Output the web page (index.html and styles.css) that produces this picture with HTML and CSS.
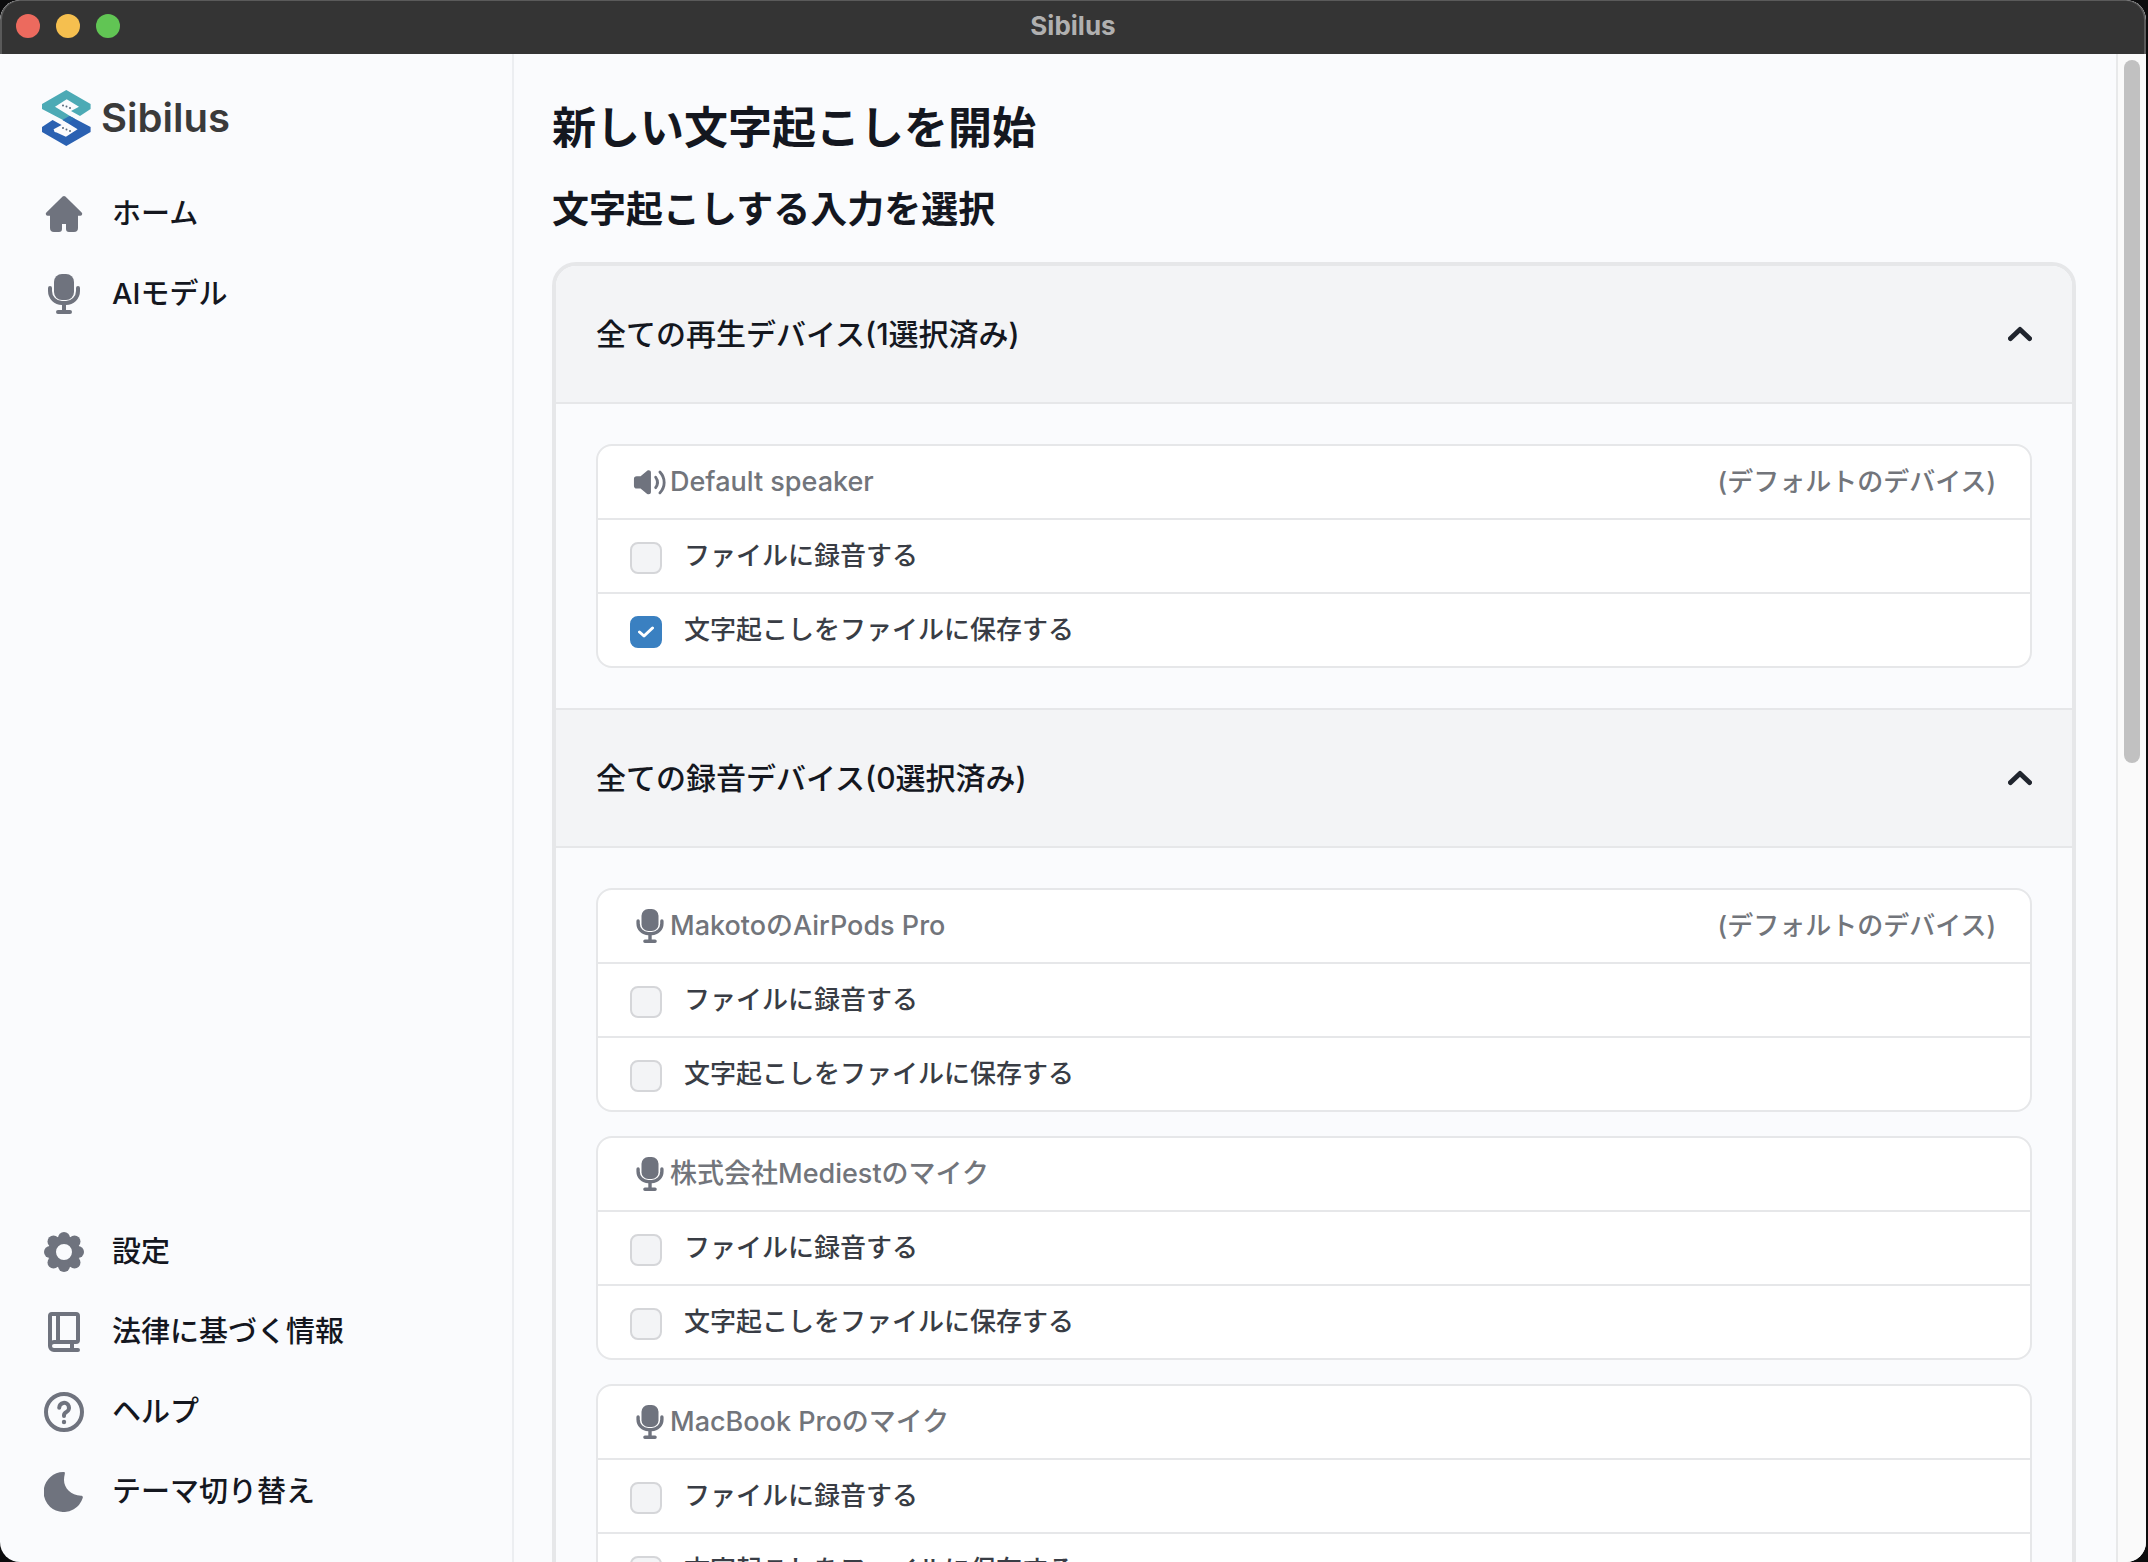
FILE: index.html
```html
<!DOCTYPE html>
<html lang="ja">
<head>
<meta charset="utf-8">
<title>Sibilus</title>
<link rel="stylesheet" href="styles.css">
</head>
<body>
<svg class="sprite" aria-hidden="true">
  <symbol id="mic" viewBox="0 0 40 40">
    <rect x="10" y="0" width="20" height="26" rx="8" fill="currentColor"/>
    <path d="M6 14v3a12 12 0 0 0 12 12h4a12 12 0 0 0 12-12v-3M20 29v8M14 38h12" fill="none" stroke="currentColor" stroke-width="4" stroke-linecap="round"/>
  </symbol>
  <symbol id="speaker" viewBox="0 0 36 36">
    <path d="M4 12C2 12 1 13 1 15v7c0 2 1 3 3 3h4l7 5.600c2 1 4 0 4-2V8c0-2-2-3-4-2L8 12Z" fill="currentColor"/>
    <path d="M24 13c2.500 3.500 2.500 7.500 0 11M28.500 7.500c6 6.500 6 15.500 0 22" fill="none" stroke="currentColor" stroke-width="3" stroke-linecap="round"/>
  </symbol>
  <symbol id="chevron" viewBox="0 0 24 16">
    <path d="M2.500 12.500 12 3.500l9.500 9" fill="none" stroke="currentColor" stroke-width="5" stroke-linecap="round" stroke-linejoin="round"/>
  </symbol>
</svg>

<div class="window">
  <header class="titlebar">
    <div class="lights">
      <button class="light close" aria-label="閉じる"></button>
      <button class="light minimize" aria-label="最小化"></button>
      <button class="light zoom" aria-label="拡大"></button>
    </div>
    <span class="window-title">Sibilus</span>
  </header>

  <div class="content">
    <aside class="sidebar">
      <div class="brand">
        <svg class="brand-mark" viewBox="0 0 49 56" aria-hidden="true">
          <path d="M24.300 0 48.600 14v5L38 26l-9-5 8-4.300-12.300-7.400L13 16.700 28 26l-7 4L0 19v-5Z" fill="#4caab5"/>
          <path d="M24.300 56 0 42v-5l10.600-7 9 5-8 4.300 1 2.700 2 .500 9.300 4.200 11.700-7.400L20.600 30l7-4 21 11v5Z" fill="#2a61b2"/>
          <path d="m20.600 30 7-4 5 2.600-6.500 4.500Z" fill="#2b72b4"/>
          <g fill="#55677a">
            <circle cx="21" cy="15.500" r="1"/><circle cx="24.500" cy="16.500" r="1"/><circle cx="28" cy="18" r="1"/>
            <circle cx="21" cy="38" r="1"/><circle cx="24.500" cy="39.500" r="1"/><circle cx="28" cy="41" r="1"/>
          </g>
        </svg>
        <span class="brand-name">Sibilus</span>
      </div>

      <nav class="nav">
        <a class="nav-item" href="#home">
          <svg class="nav-icon" viewBox="0 0 40 40" aria-hidden="true">
            <path d="M18.600 2.600a2 2 0 0 1 2.800 0L37.400 18.200A2 2 0 0 1 36 21.800h-2V34a4 4 0 0 1-4 4h-5a3 3 0 0 1-3-3v-5h-4v5a3 3 0 0 1-3 3h-5a4 4 0 0 1-4-4V21.800H4a2 2 0 0 1-1.400-3.600Z" fill="currentColor"/>
          </svg>
          <span>ホーム</span>
        </a>
        <a class="nav-item" href="#models">
          <svg class="nav-icon" aria-hidden="true"><use href="#mic"/></svg>
          <span>AIモデル</span>
        </a>
      </nav>

      <nav class="nav nav-bottom">
        <a class="nav-item" href="#settings">
          <svg class="nav-icon" viewBox="0 0 40 40" aria-hidden="true">
            <circle cx="20" cy="20" r="12" fill="none" stroke="currentColor" stroke-width="8"/>
            <g fill="currentColor">
              <circle cx="20" cy="6" r="6"/><circle cx="20" cy="34" r="6"/><circle cx="6" cy="20" r="6"/><circle cx="34" cy="20" r="6"/>
              <circle cx="9.500" cy="9.500" r="6"/><circle cx="30.500" cy="9.500" r="6"/><circle cx="9.500" cy="30.500" r="6"/><circle cx="30.500" cy="30.500" r="6"/>
            </g>
          </svg>
          <span>設定</span>
        </a>
        <a class="nav-item" href="#legal">
          <svg class="nav-icon" viewBox="0 0 40 40" aria-hidden="true">
            <path d="M6 34V4a2 2 0 0 1 2-2h24a2 2 0 0 1 2 2v24a2 2 0 0 1-2 2H10a4 4 0 0 0 0 8h24M14 2v28M28 30v8" fill="none" stroke="currentColor" stroke-width="4" stroke-linecap="round"/>
          </svg>
          <span>法律に基づく情報</span>
        </a>
        <a class="nav-item" href="#help">
          <svg class="nav-icon" viewBox="0 0 40 40" aria-hidden="true">
            <circle cx="20" cy="20" r="18" fill="none" stroke="currentColor" stroke-width="4"/>
            <path d="M15.200 15.800a4.900 4.900 0 1 1 7.200 4.300c-1.600.900-2.400 1.600-2.400 3.200v.700" fill="none" stroke="currentColor" stroke-width="4" stroke-linecap="round"/>
            <circle cx="20" cy="30" r="2.200" fill="currentColor"/>
          </svg>
          <span>ヘルプ</span>
        </a>
        <button class="nav-item" type="button">
          <svg class="nav-icon" viewBox="0 0 40 40" aria-hidden="true">
            <path d="M20 0A20 20 0 1 0 38.700 26c.500-1.300-.300-2.200-1.700-2.200C27 23.500 20 16 20 8c0-2 .300-4 .800-6 .300-1.200-.200-2-.800-2Z" fill="currentColor"/>
          </svg>
          <span>テーマ切り替え</span>
        </button>
      </nav>
    </aside>

    <main class="main">
      <h1>新しい文字起こしを開始</h1>
      <h2>文字起こしする入力を選択</h2>

      <div class="accordion">
        <section>
          <button class="accordion-head" type="button" aria-expanded="true">
            <span>全ての再生デバイス(1選択済み)</span>
            <svg class="chevron" aria-hidden="true"><use href="#chevron"/></svg>
          </button>
          <div class="accordion-body">
            <div class="device">
              <div class="device-head">
                <svg class="device-icon" aria-hidden="true"><use href="#speaker"/></svg>
                <span class="device-name">Default speaker</span>
                <span class="device-note">(デフォルトのデバイス)</span>
              </div>
              <label class="option"><input type="checkbox"><span>ファイルに録音する</span></label>
              <label class="option"><input type="checkbox" checked><span>文字起こしをファイルに保存する</span></label>
            </div>
          </div>
        </section>

        <section>
          <button class="accordion-head" type="button" aria-expanded="true">
            <span>全ての録音デバイス(0選択済み)</span>
            <svg class="chevron" aria-hidden="true"><use href="#chevron"/></svg>
          </button>
          <div class="accordion-body">
            <div class="device">
              <div class="device-head">
                <svg class="device-icon" aria-hidden="true"><use href="#mic"/></svg>
                <span class="device-name">MakotoのAirPods Pro</span>
                <span class="device-note">(デフォルトのデバイス)</span>
              </div>
              <label class="option"><input type="checkbox"><span>ファイルに録音する</span></label>
              <label class="option"><input type="checkbox"><span>文字起こしをファイルに保存する</span></label>
            </div>
            <div class="device">
              <div class="device-head">
                <svg class="device-icon" aria-hidden="true"><use href="#mic"/></svg>
                <span class="device-name">株式会社Mediestのマイク</span>
              </div>
              <label class="option"><input type="checkbox"><span>ファイルに録音する</span></label>
              <label class="option"><input type="checkbox"><span>文字起こしをファイルに保存する</span></label>
            </div>
            <div class="device">
              <div class="device-head">
                <svg class="device-icon" aria-hidden="true"><use href="#mic"/></svg>
                <span class="device-name">MacBook Proのマイク</span>
              </div>
              <label class="option"><input type="checkbox"><span>ファイルに録音する</span></label>
              <label class="option"><input type="checkbox"><span>文字起こしをファイルに保存する</span></label>
            </div>
          </div>
        </section>
      </div>
    </main>

    <div class="scrollbar"><div class="thumb"></div></div>
  </div>
</div>
</body>
</html>
```

FILE: styles.css
```css
* {
  box-sizing: border-box;
}

body {
  margin: 0;
  background: #0c0c0d;
  color: #14171f;
  font-family: Inter, "Noto Sans CJK JP", sans-serif;
}

button {
  border: 0;
  padding: 0;
  background: none;
  color: inherit;
  font: inherit;
  text-align: left;
}

svg {
  display: block;
  flex: none;
}

.sprite {
  display: none;
}

.window {
  display: flex;
  flex-direction: column;
  height: 100vh;
  margin-right: 2px;
  overflow: hidden;
  border-radius: 20px;
  background: #fafbfd;
}

/* Title bar */

.titlebar {
  display: grid;
  grid-template-columns: 1fr auto 1fr;
  align-items: center;
  flex: none;
  height: 54px;
  padding: 0 14px 4px;
  border: 2px solid #5a5a5a;
  border-width: 1px 2px 0;
  border-radius: 20px 20px 0 0;
  background: #343434;
}

.lights {
  display: flex;
  gap: 16px;
}

.light {
  width: 24px;
  height: 24px;
  border-radius: 50%;
}

.close {
  background: #ec6a5e;
}

.minimize {
  background: #f5bf4f;
}

.zoom {
  background: #61c554;
}

.window-title {
  color: #b0b0b0;
  font-size: 26px;
  font-weight: 700;
  line-height: 32px;
}

.content {
  display: flex;
  flex: 1;
  min-height: 0;
}

/* Sidebar */

.sidebar {
  display: flex;
  flex-direction: column;
  flex: none;
  width: 514px;
  padding: 36px 28px 38px 42px;
  border-right: 2px solid #eceef1;
}

.brand {
  display: flex;
  align-items: center;
  gap: 10px;
  margin-bottom: 36px;
}

.brand-mark {
  width: 49px;
  height: 56px;
}

.brand-name {
  color: #3a3a3a;
  font-size: 40px;
  font-weight: 600;
  line-height: 48px;
}

.nav {
  display: flex;
  flex-direction: column;
  gap: 16px;
}

.nav-bottom {
  margin-top: auto;
}

.nav-item {
  display: flex;
  align-items: center;
  gap: 28px;
  height: 64px;
  padding-left: 2px;
  color: inherit;
  font-size: 29px;
  font-weight: 500;
  line-height: 40px;
  text-decoration: none;
}

.nav-icon {
  width: 40px;
  height: 40px;
  color: #6f737e;
}

/* Main column */

.main {
  flex: 1;
  min-width: 0;
  overflow: hidden;
  padding: 44px 40px 40px 38px;
}

h1,
h2 {
  margin: 0;
  font-weight: 700;
}

h1 {
  margin-bottom: 28px;
  font-size: 44px;
  line-height: 60px;
}

h2 {
  margin-bottom: 28px;
  font-size: 37px;
  line-height: 48px;
}

.accordion {
  overflow: hidden;
  border: 4px solid #e6e7e9;
  border-radius: 24px;
}

.accordion-head {
  display: flex;
  align-items: center;
  justify-content: space-between;
  width: 100%;
  height: 138px;
  padding: 0 40px;
  border-bottom: 2px solid #e6e7e9;
  background: #f3f4f6;
  font-size: 30px;
  font-weight: 500;
  line-height: 40px;
}

.accordion > section + section {
  border-top: 2px solid #e6e7e9;
}

.chevron {
  width: 24px;
  height: 16px;
  color: #20252e;
}

.accordion-body {
  display: flex;
  flex-direction: column;
  gap: 24px;
  padding: 40px;
}

.device {
  overflow: hidden;
  border: 2px solid #e6e7e9;
  border-radius: 16px;
  background: #fff;
}

.device-head,
.option {
  display: flex;
  align-items: center;
  height: 72px;
  font-size: 26px;
  font-weight: 500;
  line-height: 36px;
}

.device-head {
  gap: 2px;
  padding: 0 34px;
  color: #72757b;
}

.device-icon {
  width: 36px;
  height: 34px;
  color: #6f737e;
}

.device-name {
  font-size: 27px;
}

.device-note {
  margin-left: auto;
}

.option {
  gap: 22px;
  height: 74px;
  padding: 0 32px;
  border-top: 2px solid #e6e7e9;
  color: #393d45;
}

.option input {
  flex: none;
  width: 32px;
  height: 32px;
  margin: 4px 0 0;
  appearance: none;
  border: 2px solid #d5d6d9;
  border-radius: 8px;
  background: #f3f4f6;
}

.option input:checked {
  border-color: #3a80c1;
  background: #3a80c1 url("data:image/svg+xml,%3Csvg xmlns='http://www.w3.org/2000/svg' viewBox='0 0 16 12'%3E%3Cpath d='M1.500 6 6 10l8.500-8' fill='none' stroke='white' stroke-width='3' stroke-linecap='round' stroke-linejoin='round'/%3E%3C/svg%3E") center / 16px 12px no-repeat;
}

/* Scroll track beside the main column */

.scrollbar {
  flex: none;
  width: 30px;
  padding: 6px;
  border-left: 2px solid #e8e9ea;
  background: #fafafa;
}

.thumb {
  width: 16px;
  height: 47%;
  border-radius: 8px;
  background: #c1c1c1;
}
```
